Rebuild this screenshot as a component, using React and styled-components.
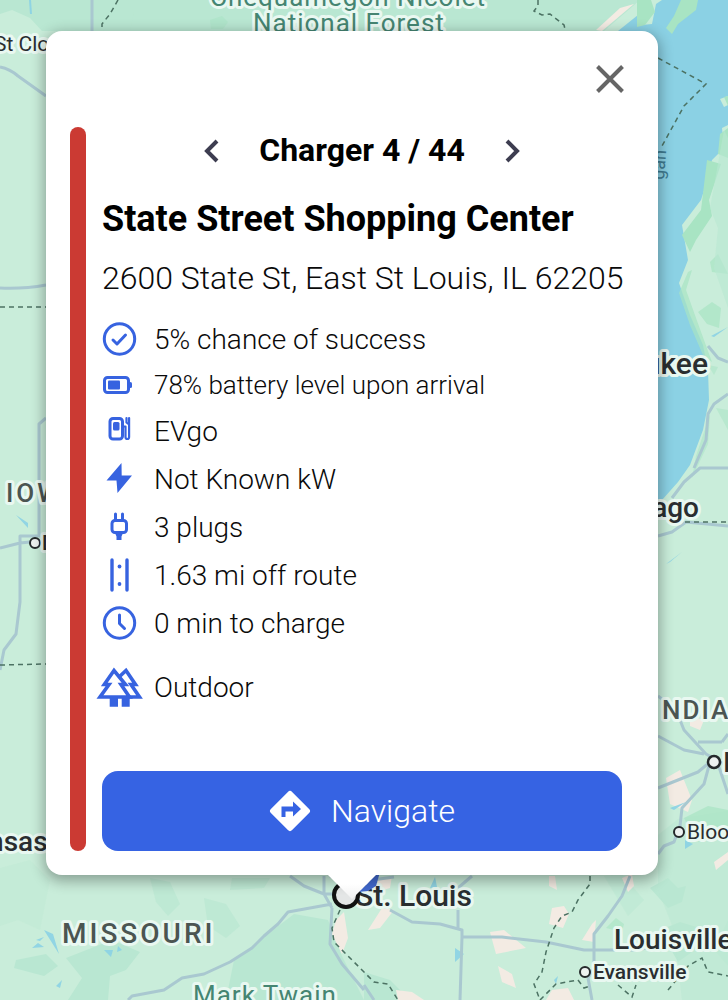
import styled, { createGlobalStyle } from "styled-components";

const GlobalStyle = createGlobalStyle`
  * {
    box-sizing: border-box;
  }

  body {
    margin: 0;
    font-family: Roboto, "Noto Sans", sans-serif;
    color: #0a0a0a;
  }
`;

const Page = styled.main`
  position: relative;
  min-height: 100vh;
  padding: 31px 70px 125px 46px;
  overflow: hidden;
  background: #c9edda;
`;

/* Map canvas, sits behind the info window */
const MapCanvas = styled.svg`
  position: absolute;
  inset: 0;
  width: 100%;
  height: 100%;

  .shade {
    fill: #b9e7d2;
  }

  .shadeStrong {
    fill: #a8e4c3;
  }

  .urban {
    fill: #f3ebe3;
  }

  .water {
    fill: #8bd1e4;
  }

  .road {
    fill: none;
    stroke: #a9c8d0;
    stroke-width: 3;
    stroke-linejoin: round;
  }

  .border {
    fill: none;
    stroke: #4c7263;
    stroke-width: 1.5;
    stroke-dasharray: 5 4;
  }
`;

const MapLabel = styled.text`
  font-family: Roboto, sans-serif;
  font-size: ${({ $size }) => $size || 20}px;
  font-weight: ${({ $weight }) => $weight || 400};
  letter-spacing: ${({ $spacing }) => $spacing || 0}px;
  fill: ${({ $color }) => $color || "#2a2e30"};
  stroke: #e9f8f1;
  stroke-width: ${({ $halo }) => $halo ?? 6}px;
  stroke-linejoin: round;
  paint-order: stroke;
`;

const InfoWindow = styled.section`
  position: relative;
  padding: 0 36px 24px 24px;
  border-radius: 16px;
  background: #ffffff;
  box-shadow: 0 4px 14px 2px rgba(0, 0, 0, 0.32);
`;

const Tail = styled.div`
  position: absolute;
  top: 100%;
  left: 50%;
  width: 50px;
  height: 25px;
  transform: translate(-50%, -1px);
  background: linear-gradient(#ffffff 40%, #f1f1f1);
  clip-path: polygon(0 0, 100% 0, 50% 100%);
`;

const Header = styled.header`
  display: flex;
  align-items: center;
  justify-content: flex-end;
  height: 96px;
  margin-right: -12px;
`;

const IconButton = styled.button`
  display: flex;
  align-items: center;
  justify-content: center;
  width: ${({ $width }) => $width}px;
  height: 48px;
  padding: 0;
  border: 0;
  background: transparent;
  color: ${({ $color }) => $color};
  cursor: pointer;
`;

const Body = styled.div`
  display: flex;
  gap: 16px;
`;

const StatusBar = styled.div`
  flex: none;
  width: 16px;
  border-radius: 8px;
  background: #cb3a33;
`;

const Content = styled.div`
  flex: 1;
  min-width: 0;
`;

const Pager = styled.nav`
  display: flex;
  align-items: center;
  justify-content: center;
  gap: 36px;
  height: 48px;
`;

const PagerText = styled.span`
  font-size: 32px;
  font-weight: 700;
  line-height: 46px;
  padding-bottom: 2px;
  color: #000000;
`;

const Name = styled.h1`
  margin: 20px 0 0;
  font-size: 36px;
  font-weight: 700;
  line-height: 48px;
  color: #000000;
`;

/* Long addresses may run into the card's right padding */
const Address = styled.p`
  margin: 12px -12px 0 0;
  font-size: 32px;
  font-weight: 300;
  line-height: 46px;
`;

const Details = styled.ul`
  margin: 14px 0 0;
  padding: 0;
  list-style: none;
`;

const Detail = styled.li`
  display: flex;
  align-items: center;
  gap: 18px;
  height: ${({ $height }) => $height || 48}px;
  font-size: ${({ $small }) => ($small ? 26 : 28)}px;
  font-weight: 300;
`;

const DetailIcon = styled.svg`
  flex: none;
  width: 34px;
  height: 34px;
  overflow: visible;
  fill: none;
  stroke: #3763e0;
  stroke-width: 3;
  stroke-linecap: round;
  stroke-linejoin: round;

  .solid {
    fill: #3763e0;
    stroke: none;
  }
`;

const NavigateButton = styled.button`
  display: flex;
  align-items: center;
  justify-content: center;
  gap: 20px;
  width: 100%;
  height: 80px;
  margin-top: 44px;
  border: 0;
  border-radius: 16px;
  background: #3663e3;
  color: #ffffff;
  font-family: inherit;
  font-size: 32px;
  font-weight: 300;
  cursor: pointer;
`;

const icons = {
  success: (
    <>
      <circle cx="17.5" cy="17" r="15.2" />
      <path d="M11 18l4 4 8.500-9" />
    </>
  ),
  battery: (
    <>
      <rect x="2.500" y="9.500" width="24" height="15" rx="3" />
      <rect className="solid" x="6" y="12.500" width="12" height="9" rx="1" />
      <path d="M28.500 15.500v3" />
    </>
  ),
  station: (
    <>
      <rect x="8" y="4.500" width="12.500" height="20.500" rx="3" />
      <rect className="solid" x="11" y="8" width="6.500" height="8.500" rx="1.500" />
      <path d="M21 12.500h2.500v10.500q0 2 1.800 2t1.800-2V10.500l-2.600-2V4M27.100 4v7" strokeWidth="2.200" />
    </>
  ),
  bolt: <path className="solid" d="M19.500 1L4.500 18.500H14.500L15.500 31 30 13.500H19.700z" />,
  plug: (
    <>
      <path d="M13.500 4v6M20.500 4v6" />
      <rect x="10" y="10.500" width="14.500" height="12" rx="3" />
      <path className="solid" d="M13 23h8l-1.500 3.500v3.500h-5v-3.500z" />
    </>
  ),
  road: (
    <>
      <path d="M10 2v30M25 2v30" strokeWidth="3.400" />
      <circle className="solid" cx="17.500" cy="8.500" r="1.900" />
      <circle className="solid" cx="17.500" cy="26" r="1.900" />
    </>
  ),
  clock: (
    <>
      <circle cx="17.500" cy="17" r="15.200" />
      <path d="M17.500 9v8.500l5 5" />
    </>
  ),
  trees: (
    <g strokeLinejoin="miter" strokeLinecap="butt" strokeWidth="3.600">
      <path d="M16 8L24 .5l9.500 14h-4.500l8.500 12.500H20" />
      <path d="M12 .5L2.300 14.500h4.700L-2 27h29.500l-8.500-12.500h4.500z" fill="#ffffff" />
      <path className="solid" d="M7.700 27H16v9.800H7.700zM19.700 27h8v9.800h-8z" />
    </g>
  ),
};

const details = [
  { icon: "success", text: "5% chance of success" },
  { icon: "battery", text: "78% battery level upon arrival", height: 44, small: true },
  { icon: "station", text: "EVgo" },
  { icon: "bolt", text: "Not Known kW" },
  { icon: "plug", text: "3 plugs" },
  { icon: "road", text: "1.63 mi off route" },
  { icon: "clock", text: "0 min to charge" },
  { icon: "trees", text: "Outdoor", height: 80 },
];

function MapBackground() {
  return (
    <MapCanvas viewBox="0 0 728 1000" preserveAspectRatio="xMidYMid slice" aria-label="Map">
      {/* terrain */}
      <path className="shade" d="M0 0h640l-36 31H42L30 18 12 10 0 14z" />
      <path className="shade" d="M98 0h28l8 12-4 19h-26l-6-14z" fillOpacity=".5" />
      <path className="shadeStrong" d="M210 20l12-4 6 6-5 7h-12z" fillOpacity=".5" />
      <path className="shade" d="M150 878l20 4 10 22-12 12-12-14zM232 878h38l-6 10-34 2zM204 898l22 6 14 22-14 12-18-12z" fillOpacity=".7" />
      <path className="shade" d="M16 960l30-6 12 12-14 10-30-8zM66 958l46-18 28 12-14 18-16 6-2 24H68l14-22z" />
      <path className="shade" d="M234 960l60-46 34 6 14 36 22 44H226z" />
      <path className="shade" d="M364 972l26 8 20 20h-46zM650 888l18-10 10 10 8-2-4 16-14 6zM660 930l20-8 20 6-8 24-14 10z" />
      <path className="shade" d="M604 876l18-2 22 26-16 16zM728 920l-14 30 14 16z" fillOpacity=".5" />
      <path className="shade" d="M658 835l20-16 50-8v189h-46l-8-70-16-40z" fillOpacity=".5" />
      <path className="shadeStrong" d="M684 818l24-12 20 4v26l-32 6z" fillOpacity=".7" />
      <path className="shadeStrong" d="M606 928l10-10 8 6-2 8z" fillOpacity=".6" />
      <path className="shade" d="M0 868l30-8 20 20-10 50-22-10-18 6z" fillOpacity=".3" />

      {/* urban areas */}
      <path className="urban" d="M602 31l32-27-14 4-24 22z" />
      <path className="urban" d="M549 876h6l2 14-8-4zM552 908l12-2 5 8-6 14-14-4zM592 924l4-4-2 22-12-2zM622 878l10-4 2 12-6 6z" />
      <path className="urban" d="M490 932l14-2 22 18-30 6zM498 966l14 8 4 14-14-6zM396 990l16 2 12 8h-26zM382 908l12 2-14 18-12 2z" />
      <path className="urban" d="M336 920l8-8 4 26-6 16-10-20zM378 880l14-4-2 12-14 4z" />
      <path className="urban" d="M666 778l14-8 12 30-4 12-18-8zM690 716l14 4-4 10-10-4zM714 862l14-10v8l-12 10z" />
      <path className="urban" d="M552 990l16-2 6 12h-28z" />

      {/* Lake Michigan and its shores */}
      <path
        className="water"
        d="M618 31l20-16 4 10 10-1 4-20 6-4h66v96l-8 3 4 8 4-2v20l-6 3 2 20-12 12-4 18-7 22-19 25 6 35-9 23 11 32 13 30 5 25 1 30-6 30-13 35-12 17-16 18h-20V31z"
      />
      <path className="shadeStrong" d="M637 0h14l4 12-10 13-8 2z" />
      <path className="shadeStrong" d="M681 0h17l-2 10-18 14-6 10-6-6 8-12z" />
      <path className="shadeStrong" d="M724 97l4-1v10zM720 134l8-6v30l-10-4z" />
      <path className="shadeStrong" d="M707 160l14 4-12 36 3 16-16 24-6 12-8-17 19-25z" />
      <path className="shadeStrong" d="M688 272l4-2-6 20 10 28 16 44-9-7-13-30-11-32zM698 312l14-10 9 6-2 20-12-4zM710 262l8-8 10 20-16-2z" fillOpacity=".7" />
      <path className="shadeStrong" d="M716 408l12 2v20zM710 414l-2 30-16 34 4-22zM708 365l10 2-4 8z" fillOpacity=".5" />
      <path className="shade" d="M724 130l4 8v170l-14-40 4-40-8-20z" fillOpacity=".6" />

      {/* small water bodies */}
      <path className="water" d="M44 930l9 4 6 20zM36 940l8-3-4 4zM32 948l6-5 6 4zM104 950h9l-2 7zM118 946l4 4-5 2zM56 986l6-6-2 8z" fillOpacity=".9" />
      <path className="water" d="M455 948l9 6-9 8zM430 888l5-11 2 10zM554 980l4-4-2 8zM670 808l16-6-12 8zM685 840l8 4-8 5zM666 564l16-12-12 10z" fillOpacity=".9" />
      <path className="water" d="M16 515l12 8v5zM29 0h2l1 14-2 0zM711 336l17-9-14 10z" fillOpacity=".9" />

      {/* roads */}
      <path className="road" d="M92 0v31M0 67q10 2 18 9l28 20M0 288q24 1 46-3M46 418l-7 6v112H20v66l-4 32-12 16-4 20M0 548l20-5 20-2" />
      <path className="road" d="M128 1000l4-4 32-6 18-12 22-4 26-12 22-14 12-12 14-12 10-12 44-8M290 876l14 10 20 8h20M324 876v18l8 14M332 908l-2 36 12 20 22 26M330 876l12 4" />
      <path className="road" d="M390 910l22 12 28 2 22 6v7h40l44 5 38 8h50l14-2M462 937l-2 63M458 910v20M458 888l14-12M594 948v-14l14-18 14-20 8-20M594 948v20l-6 10M588 978l4 22M364 985l10 15M372 880l22-3" />
      <path className="road" d="M658 696l18 14 8 20 22 24 22 12M658 736l26 14 20 4M658 788l40-16 12-10M722 742h-24M728 734l-6 8M710 762l-6 22-22 24-2 18-6 16-10 4-6 8M718 764l10 30" />
      <path className="road" d="M728 468h-28l-16 14-12 16M728 394l-14 10-6 10-2 26-12 28M708 346l10 12 10 4M658 536l14-4 14-10 42 4" />

      {/* state borders */}
      <path className="border" d="M118 0l-8 14-8 10v7M0 307h46M0 665l46-1M676 522h52" />
      <path className="border" d="M538 0v6l-4 5 8 4 8-1 14 11 2 8M658 58l48 26-22 22-22 40" />
      <path className="border" d="M340 910l-8 18 2 14 14 14 16 16 10 10 14 2 10 16M590 876v8l-12 16-6 12-10 4-8 12 -4 12-4 12-4 20-8 12 6 16" />
      <path className="border" d="M540 1000l16-16 22-4 6 8 6-2M618 985l14 12 4-12M668 990l20-24 14-8 6 14 20 4" />

      {/* city markers */}
      <g fill="#edf2f0" stroke="#24292b">
        <circle cx="35" cy="543" r="5" strokeWidth="2" />
        <circle cx="714" cy="762" r="6" strokeWidth="2.500" />
        <circle cx="679" cy="832" r="5" strokeWidth="2" />
        <circle cx="585" cy="972" r="5" strokeWidth="2" />
      </g>

      <MapLabel x="210" y="6" $size={26} $color="#458572" $spacing={1}>Chequamegon Nicolet</MapLabel>
      <MapLabel x="253" y="32" $size={26} $color="#458572" $spacing={1}>National Forest</MapLabel>
      <MapLabel x="-6" y="51" $size={21}>St Cloud</MapLabel>
      <MapLabel x="6" y="502" $size={26} $weight={500} $color="#4b5552" $spacing={3}>IOWA</MapLabel>
      <MapLabel x="42" y="550" $size={21} $weight={500}>Des Moines</MapLabel>
      <MapLabel x="103" y="851" $size={28} $weight={500} textAnchor="end">Kansas City</MapLabel>
      <MapLabel x="708" y="374" $size={30} $weight={500} textAnchor="end">Milwaukee</MapLabel>
      <MapLabel x="699" y="517" $size={28} $weight={500} textAnchor="end">Chicago</MapLabel>
      <MapLabel x="662" y="719" $size={26} $weight={500} $color="#4b5552" $spacing={2}>NDIANA</MapLabel>
      <MapLabel x="723" y="772" $size={28} $weight={500}>Indianapolis</MapLabel>
      <MapLabel x="687" y="839" $size={21}>Bloomington</MapLabel>
      <MapLabel x="62" y="943" $size={28} $weight={500} $color="#4b5552" $spacing={3}>MISSOURI</MapLabel>
      <MapLabel x="193" y="1004" $size={26} $color="#458572" $spacing={1}>Mark Twain</MapLabel>
      <MapLabel x="614" y="949" $size={28} $weight={500}>Louisville</MapLabel>
      <MapLabel x="593" y="979" $size={21} $weight={500}>Evansville</MapLabel>
      <MapLabel x="664" y="180" $size={18} $color="#3f7b91" $halo={0} transform="rotate(-86 664 180)">gan</MapLabel>

      {/* selected charger marker */}
      <path d="M352 868h28l-4 16-18 10z" fill="#4169cf" />
      <MapLabel x="355" y="906" $size={30} $weight={500}>St. Louis</MapLabel>
      <path d="M358 892l22-20-4 14-8 5z" fill="#4169cf" />
      <circle cx="346" cy="895" r="12" fill="#e4e6e6" stroke="#111111" strokeWidth="4" />
    </MapCanvas>
  );
}

export default function App() {
  return (
    <>
      <GlobalStyle />
      <Page>
        <MapBackground />
        <InfoWindow aria-label="Charger details">
          <Header>
            <IconButton type="button" aria-label="Close" $width={48} $color="#666666">
              <svg width="28" height="28" viewBox="0 0 28 28" fill="none" stroke="currentColor" strokeWidth="4">
                <path d="M1.500 1.500l25 25M26.500 1.500l-25 25" />
              </svg>
            </IconButton>
          </Header>
          <Body>
            <StatusBar />
            <Content>
              <Pager aria-label="Chargers">
                <IconButton type="button" aria-label="Previous charger" $width={24} $color="#3d3d50">
                  <svg width="24" height="24" viewBox="0 0 24 24" fill="none" stroke="currentColor" strokeWidth="4">
                    <path d="M18 2L8 12l10 10" />
                  </svg>
                </IconButton>
                <PagerText>Charger 4 / 44</PagerText>
                <IconButton type="button" aria-label="Next charger" $width={24} $color="#3d3d50">
                  <svg width="24" height="24" viewBox="0 0 24 24" fill="none" stroke="currentColor" strokeWidth="4">
                    <path d="M6 2l10 10L6 22" />
                  </svg>
                </IconButton>
              </Pager>
              <Name>State Street Shopping Center</Name>
              <Address>2600 State St, East St Louis, IL 62205</Address>
              <Details>
                {details.map(({ icon, text, height, small }) => (
                  <Detail key={icon} $height={height} $small={small}>
                    <DetailIcon viewBox="0 0 34 34" aria-hidden="true">
                      {icons[icon]}
                    </DetailIcon>
                    <span>{text}</span>
                  </Detail>
                ))}
              </Details>
              <NavigateButton type="button">
                <svg width="42" height="42" viewBox="0 0 42 42" aria-hidden="true">
                  <rect x="6" y="6" width="30" height="30" rx="3" fill="#ffffff" transform="rotate(45 21 21)" />
                  <path d="M12.500 27v-10.500h11.500v-5l8 7.500-8 7.500v-5h-7.500v5.500z" fill="#3663e3" />
                </svg>
                Navigate
              </NavigateButton>
            </Content>
          </Body>
          <Tail />
        </InfoWindow>
      </Page>
    </>
  );
}
